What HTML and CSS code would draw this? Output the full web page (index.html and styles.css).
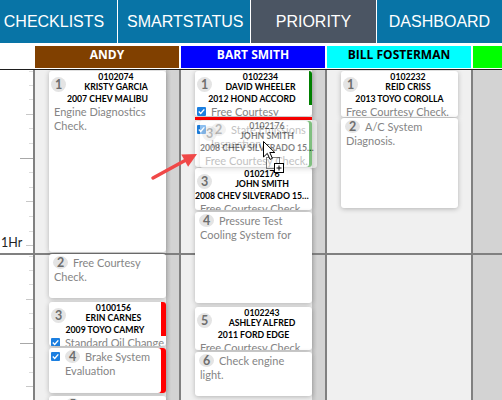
FILE: index.html
```
<!DOCTYPE html>
<html lang="en">
  <head>
    <meta charset="UTF-8" />
    <meta name="viewport" content="width=device-width, initial-scale=1.0" />
    <title>Priority Board</title>
    <link rel="stylesheet" href="styles.css">
  </head>
  <body>
    <div class="page">
      <nav class="tabs">
        <a class="tab">CHECKLISTS</a>
        <a class="tab">SMARTSTATUS</a>
        <a class="tab active">PRIORITY</a>
        <a class="tab">DASHBOARD</a>
      </nav>

      <div class="techs">
        <div class="tech blank"></div>
        <div class="tech andy">ANDY</div>
        <div class="tech bart">BART SMITH</div>
        <div class="tech bill">BILL FOSTERMAN</div>
        <div class="tech extra"></div>
      </div>
      <div class="rule"></div>

      <div class="board">
        <div class="axis">
          <div class="hour"><span class="hour-label">1Hr</span></div>
          <div class="hour"></div>
        </div>

        <!-- ANDY -->
        <div class="lane busy">
          <div class="card" style="height:181px;margin-top:1px">
            <div class="head">
              <span class="num">1</span>
              <div class="line">0102074</div>
              <div class="line">KRISTY GARCIA</div>
              <div class="veh">2007 CHEV MALIBU</div>
            </div>
            <p class="desc">Engine Diagnostics Check.</p>
          </div>
          <div class="card" style="height:44px">
            <p class="desc note"><span class="num">2</span>Free Courtesy Check.</p>
          </div>
          <div class="card" style="height:44px;margin-top:4px">
            <div class="head flag-red">
              <span class="num">3</span>
              <div class="line">0100156</div>
              <div class="line">ERIN CARNES</div>
              <div class="veh">2009 TOYO CAMRY</div>
            </div>
            <div class="task">
              <svg class="box" viewBox="0 0 9 9"><rect width="9" height="9" rx="1" fill="#1c7fe0"/><path d="M1.8 4.6 L3.7 6.5 L7.3 2.4" fill="none" stroke="#fff" stroke-width="1.4"/></svg>
              <p class="desc single">Standard Oil Change</p>
            </div>
          </div>
          <div class="card flag-red" style="height:45px">
            <div class="task note">
              <svg class="box" viewBox="0 0 9 9"><rect width="9" height="9" rx="1" fill="#1c7fe0"/><path d="M1.8 4.6 L3.7 6.5 L7.3 2.4" fill="none" stroke="#fff" stroke-width="1.4"/></svg>
              <p class="desc"><span class="num">4</span>Brake System Evaluation</p>
            </div>
          </div>
          <div class="card" style="height:44px;margin-top:3px">
            <div class="task note">
              <svg class="box" viewBox="0 0 9 9"><rect width="9" height="9" rx="1" fill="#1c7fe0"/><path d="M1.8 4.6 L3.7 6.5 L7.3 2.4" fill="none" stroke="#fff" stroke-width="1.4"/></svg>
              <p class="desc"><span class="num">5</span>Tire Rotation</p>
            </div>
          </div>
        </div>

        <!-- BART SMITH -->
        <div class="lane busy">
          <div class="card" style="height:45px;margin-top:1px">
            <div class="head flag-green">
              <span class="num">1</span>
              <div class="line">0102234</div>
              <div class="line">DAVID WHEELER</div>
              <div class="veh">2012 HOND ACCORD</div>
            </div>
            <div class="task">
              <svg class="box" viewBox="0 0 9 9"><rect width="9" height="9" rx="1" fill="#1c7fe0"/><path d="M1.8 4.6 L3.7 6.5 L7.3 2.4" fill="none" stroke="#fff" stroke-width="1.4"/></svg>
              <p class="desc">Free Courtesy Check.</p>
            </div>
          </div>
          <div class="drop"></div>
          <div class="card flag-green" style="height:46px;margin-top:1px">
            <div class="task note">
              <svg class="box" viewBox="0 0 9 9"><rect width="9" height="9" rx="1" fill="#1c7fe0"/><path d="M1.8 4.6 L3.7 6.5 L7.3 2.4" fill="none" stroke="#fff" stroke-width="1.4"/></svg>
              <p class="desc"><span class="num">2</span>State Emissions Inspection</p>
            </div>
          </div>
          <div class="card" style="height:42px;margin-top:1px">
            <div class="head">
              <span class="num">3</span>
              <div class="line">0102176</div>
              <div class="line">JOHN SMITH</div>
              <div class="veh">2008 CHEV SILVERADO 1500 HD</div>
            </div>
            <p class="desc">Free Courtesy Check.</p>
          </div>
          <div class="card" style="height:91px">
            <p class="desc note"><span class="num">4</span>Pressure Test Cooling System for</p>
          </div>
          <div class="card" style="height:43px;margin-top:4px">
            <div class="head">
              <span class="num">5</span>
              <div class="line">0102243</div>
              <div class="line">ASHLEY ALFRED</div>
              <div class="veh">2011 FORD EDGE</div>
            </div>
            <p class="desc">Free Courtesy Check.</p>
          </div>
          <div class="card" style="height:44px">
            <p class="desc note"><span class="num">6</span>Check engine light.</p>
          </div>
        </div>

        <!-- BILL FOSTERMAN -->
        <div class="lane">
          <div class="card" style="height:46px;margin-top:1px">
            <div class="head">
              <span class="num">1</span>
              <div class="line">0102232</div>
              <div class="line">REID CRISS</div>
              <div class="veh">2013 TOYO COROLLA</div>
            </div>
            <p class="desc">Free Courtesy Check.</p>
          </div>
          <div class="card" style="height:90px;margin-top:1px">
            <p class="desc note"><span class="num">2</span>A/C System Diagnosis.</p>
          </div>
        </div>

        <div class="lane spare"></div>
      </div>

      <!-- drag image of the card being moved -->
      <div class="ghost">
        <div class="card" style="height:48px">
          <div class="head">
            <span class="num">3</span>
            <div class="line">0102176</div>
            <div class="line">JOHN SMITH</div>
            <div class="veh">2008 CHEV SILVERADO 1500 HD</div>
          </div>
          <p class="desc">Free Courtesy Check.</p>
        </div>
      </div>

      <svg class="pointer" width="24" height="34" viewBox="0 0 24 34">
        <rect x="3.5" y="16.5" width="13" height="11" fill="none" stroke="#000" stroke-dasharray="1 1"/>
        <path d="M0.5 0.5 V16 L4.3 12.4 L7 18.4 L9.4 17.4 L6.8 11.5 H11.8 Z" fill="#fff" stroke="#000"/>
        <rect x="11.5" y="22.5" width="9" height="9" fill="#fff" stroke="#000"/>
        <path d="M16 24.5 V29.5 M13.5 27 H18.5" stroke="#000"/>
      </svg>

      <svg class="callout" width="70" height="50" viewBox="0 0 70 50">
        <line x1="13" y1="38" x2="45" y2="20.5" stroke="#f04848" stroke-width="3.5" stroke-linecap="round"/>
        <path d="M57 14 L48.1 26.8 L41.3 14.6 Z" fill="#f04848"/>
      </svg>
    </div>
  </body>
</html>
```

FILE: styles.css
```
* {
  box-sizing: border-box;
}

body {
  margin: 0;
  font-family: Lato, "Open Sans", sans-serif;
  background-color: white;
}

.page {
  position: relative;
  width: 502px;
  height: 400px;
  overflow: hidden;
}

/* top tabs */
.tabs {
  display: flex;
  height: 43px;
  margin-left: -9px;
  background-color: #0874a6;
}

.tab {
  min-width: 126px;
  padding: 0 9px;
  line-height: 43px;
  text-align: center;
  color: white;
  font-family: "Liberation Sans", Arial, sans-serif;
  font-size: 16px;
  white-space: nowrap;
  background-color: #0874a6;
}

.tab + .tab {
  border-left: 1px solid white;
}

.tab.active {
  background-color: #4b5563;
}

/* technician header */
.techs {
  display: grid;
  grid-template-columns: 33px 146px 146px 146px 1fr;
  height: 22px;
  margin-top: 3px;
}

.tech {
  border-left: 2px solid white;
  font-family: "Open Sans", sans-serif;
  font-size: 12px;
  font-weight: bold;
  line-height: 18px;
  text-align: center;
  color: white;
  white-space: nowrap;
  overflow: hidden;
}

.tech.blank {
  border: none;
}

.andy {
  background-color: #804000;
}

.bart {
  background-color: #0000ff;
}

.bill {
  background-color: #00ffff;
  color: black;
}

.extra {
  background-color: #00ff00;
}

.rule {
  height: 2px;
  border-top: 1px solid white;
  background-color: #1e1e1e;
}

/* schedule */
.board {
  display: grid;
  grid-template-columns: 33px 146px 146px 146px 1fr;
  height: 330px;
  overflow: hidden;
}

.hour {
  display: flex;
  flex-direction: column;
  justify-content: flex-end;
  height: 185px;
  border-bottom: 2px solid #808080;
  background:
    linear-gradient(#a8a8a8, #a8a8a8) right 0 top 88px / 13px 1px no-repeat,
    linear-gradient(#dcdcdc, #dcdcdc) right 0 top 1px / 4px 1px no-repeat,
    repeating-linear-gradient(transparent 0 42.8px, #c8c8c8 42.8px 43.8px) right 0 top 1px / 7px 100% no-repeat,
    repeating-linear-gradient(transparent 0 13.6px, #dcdcdc 13.6px 14.6px) right 0 top 1px / 4px 100% no-repeat;
}

.hour-label {
  padding-left: 1px;
  margin-bottom: 3px;
  font-size: 12.5px;
  line-height: 14px;
  color: #222;
}

.lane {
  display: flex;
  flex-direction: column;
  padding: 0 13px 0 14px;
  border-left: 2px solid #808080;
  background:
    linear-gradient(#808080, #808080) 0 183px / 100% 2px no-repeat,
    #f0f0f0;
}

.lane.busy {
  background:
    linear-gradient(#808080, #808080) 0 183px / 100% 2px no-repeat,
    linear-gradient(to right, #c2c2c2, #d3d3d3 5px) right top / 13px 100% no-repeat,
    #f0f0f0;
}

.lane.spare {
  background:
    linear-gradient(#808080, #808080) 0 183px / 100% 2px no-repeat,
    #d3d3d3;
}

/* cards */
.card {
  flex: none;
  width: 117px;
  margin-top: 2px;
  background-color: white;
  border-radius: 3px;
  box-shadow: 0 1px 5px rgba(0, 0, 0, 0.25);
  overflow: hidden;
}

.card.flag-red {
  box-shadow: inset -5px 0 0 #ff0000, 0 1px 5px rgba(0, 0, 0, 0.25);
}

.card.flag-green {
  box-shadow: inset -3px 0 0 #008000, 0 1px 5px rgba(0, 0, 0, 0.25);
}

.head {
  padding-top: 1px;
  font-size: 8.7px;
  font-weight: bold;
  text-align: center;
  color: black;
}

.head.flag-red {
  border-right: 5px solid #ff0000;
}

.head.flag-green {
  border-right: 3px solid #008000;
}

.num {
  float: left;
  width: 15px;
  height: 15px;
  margin: 5px 0 0 2px;
  border-radius: 50%;
  background-color: #e4e4e4;
  color: #6e6e6e;
  font-size: 12.5px;
  font-weight: bold;
  line-height: 15px;
  text-align: center;
}

.line {
  line-height: 10px;
  white-space: nowrap;
}

.veh {
  clear: left;
  line-height: 13px;
  white-space: nowrap;
  overflow: hidden;
  text-overflow: ellipsis;
}

.desc {
  margin: 0;
  padding: 0 4px 0 5px;
  font-size: 11px;
  line-height: 13.5px;
  color: #858585;
}

.note {
  padding-top: 2px;
}

.note .num,
.task .num {
  float: none;
  display: inline-block;
  vertical-align: top;
  height: 13px;
  margin: 0 5px 0 -1px;
  line-height: 13px;
}

.task .num {
  margin-left: 0;
}

.task {
  display: flex;
  align-items: flex-start;
}

.task .desc {
  padding: 0 3px 0 0;
}

.task .single {
  white-space: nowrap;
}

.box {
  flex: none;
  width: 9px;
  height: 9px;
  margin: 2px 5px 0 2px;
}

.drop {
  flex: none;
  width: 117px;
  height: 3px;
  margin-top: 1px;
  background-color: #ff0000;
}

/* drag feedback */
.ghost {
  position: absolute;
  left: 200px;
  top: 120px;
  opacity: 0.5;
}

.ghost .card {
  margin: 0;
}

.pointer {
  position: absolute;
  left: 263px;
  top: 141px;
}

.callout {
  position: absolute;
  left: 140px;
  top: 140px;
}
```
